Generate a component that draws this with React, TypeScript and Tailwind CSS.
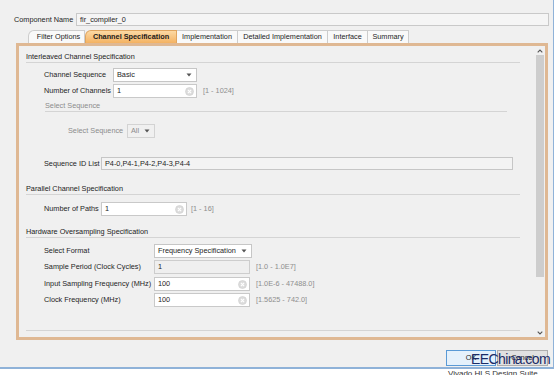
import React from "react";

const Caret = () => (
  <svg width="6" height="4" viewBox="0 0 6 4" className="shrink-0">
    <path d="M0.5 0.5 L5.5 0.5 L3 3.5 Z" fill="#555" />
  </svg>
);

const ClearIcon = () => (
  <svg width="9" height="9" viewBox="0 0 9 9" className="shrink-0">
    <circle cx="4.5" cy="4.5" r="4" fill="#dcdcdc" stroke="#cfcfcf" strokeWidth="0.6" />
    <path d="M2.9 2.9 L6.1 6.1 M6.1 2.9 L2.9 6.1" stroke="#ffffff" strokeWidth="1.1" />
  </svg>
);

const Dropdown = ({ text, w, disabled }: { text: string; w: string; disabled?: boolean }) => (
  <div
    className={`${w} h-[14px] shrink-0 flex items-center justify-between pl-[3px] pr-[4px] border ${
      disabled ? "border-[#d3d3d3] bg-[#f0f0f0] text-[#8c8c8c]" : "border-[#c6c6c6] bg-white"
    }`}
  >
    <span>{text}</span>
    <Caret />
  </div>
);

const Input = ({ text, w, clear, disabled }: { text: string; w: string; clear?: boolean; disabled?: boolean }) => (
  <div
    className={`${w} h-[14px] shrink-0 flex items-center justify-between pl-[3px] pr-[2px] border ${
      disabled ? "border-[#cdcdcd] bg-[#efefef]" : "border-[#c9c9c9] bg-white"
    }`}
  >
    <span>{text}</span>
    {clear && <ClearIcon />}
  </div>
);

const Header = ({ text, h }: { text: string; h: string }) => (
  <div className={`${h} flex items-end border-b border-[#d4d4d4] text-[#222]`}>
    <span>{text}</span>
  </div>
);

const Range = ({ text, ml }: { text: string; ml: string }) => (
  <span className={`${ml} text-[#8e8e8e]`}>{text}</span>
);

export default function App() {
  return (
    <div className="relative w-[557px] h-[375px] overflow-hidden whitespace-nowrap bg-white text-[7.3px] leading-[10px] text-[#1e1e1e] font-['Liberation_Sans',Arial,sans-serif]">
      <div className="w-[554px] h-[369px] bg-[#f0f0f0] border-r border-b-2 border-[#8fb2d8] flex flex-col">
        {/* Component name */}
        <div className="flex items-center h-[13px] mt-[13px] pl-[14px] pr-[4px]">
          <span className="w-[62px] shrink-0">Component Name</span>
          <div className="flex-1 h-[13px] flex items-center pl-[3px] border border-[#c9c9c9] bg-[#f5f5f5]">
            fir_compiler_0
          </div>
        </div>

        {/* Tabs */}
        <div className="flex h-[13px] mt-[4px] pl-[28px]">
          <div className="w-[57px] flex items-center justify-center pl-[4px] border-t border-l border-r border-[#cdcdcd] bg-[#f9f9f9] rounded-tl-[6px]">
            Filter Options
          </div>
          <div className="w-[92px] flex items-center justify-center font-bold border-t border-x border-[#e0a55f] bg-gradient-to-b from-[#fcd9a3] to-[#f4b261] rounded-tl-[6px] text-[#1a1a1a]">
            Channel Specification
          </div>
          <div className="w-[61px] flex items-center justify-center border-t border-r border-[#cdcdcd] bg-[#f9f9f9]">
            Implementation
          </div>
          <div className="w-[90px] flex items-center justify-center border-t border-r border-[#cdcdcd] bg-[#f9f9f9]">
            Detailed Implementation
          </div>
          <div className="w-[40px] flex items-center justify-center border-t border-r border-[#cdcdcd] bg-[#f9f9f9]">
            Interface
          </div>
          <div className="w-[41px] flex items-center justify-center border-t border-r border-[#cdcdcd] bg-[#f9f9f9]">
            Summary
          </div>
        </div>

        {/* Panel */}
        <div className="ml-[16px] w-[532px] h-[297px] border-[3px] border-[#dfb893] flex bg-[#f0f0f0]">
          <div className="flex-1 flex flex-col pl-[7px] pr-[15px]">
            <Header text="Interleaved Channel Specification" h="h-[17px]" />

            <div className="mt-[5px] h-[14px] flex items-center ml-[18px]">
              <span className="w-[69px] shrink-0">Channel Sequence</span>
              <Dropdown text="Basic" w="w-[84px]" />
            </div>

            <div className="mt-[2px] h-[14px] flex items-center ml-[18px]">
              <span className="w-[69px] shrink-0">Number of Channels</span>
              <Input text="1" w="w-[84px]" clear />
              <Range text="[1 - 1024]" ml="ml-[6px]" />
            </div>

            <div className="h-[14px] flex items-end ml-[19px] mr-[13px] border-b border-[#d4d4d4] text-[#8c8c8c]">
              <span>Select Sequence</span>
            </div>

            <div className="mt-[12px] h-[14px] flex items-center ml-[42px]">
              <span className="w-[59px] shrink-0 text-[#8c8c8c]">Select Sequence</span>
              <Dropdown text="All" w="w-[28px]" disabled />
            </div>

            <div className="mt-[19px] h-[13px] flex items-center ml-[18px] mr-[7px]">
              <span className="w-[57px] shrink-0">Sequence ID List</span>
              <div className="flex-1 h-[13px] flex items-center pl-[3px] border border-[#c6c6c6] bg-[#f3f3f3]">
                P4-0,P4-1,P4-2,P4-3,P4-4
              </div>
            </div>

            <Header text="Parallel Channel Specification" h="h-[25px]" />

            <div className="mt-[7px] h-[14px] flex items-center ml-[18px]">
              <span className="w-[57px] shrink-0">Number of Paths</span>
              <Input text="1" w="w-[86px]" clear />
              <Range text="[1 - 16]" ml="ml-[4px]" />
            </div>

            <Header text="Hardware Oversampling Specification" h="h-[22px]" />

            <div className="mt-[6px] h-[14px] flex items-center ml-[18px]">
              <span className="w-[110px] shrink-0">Select Format</span>
              <Dropdown text="Frequency Specification" w="w-[98px]" />
            </div>

            <div className="mt-[2px] h-[14px] flex items-center ml-[18px]">
              <span className="w-[110px] shrink-0">Sample Period (Clock Cycles)</span>
              <Input text="1" w="w-[96px]" disabled />
              <Range text="[1.0 - 1.0E7]" ml="ml-[6px]" />
            </div>

            <div className="mt-[3px] h-[14px] flex items-center ml-[18px]">
              <span className="w-[110px] shrink-0">Input Sampling Frequency (MHz)</span>
              <Input text="100" w="w-[96px]" clear />
              <Range text="[1.0E-6 - 47488.0]" ml="ml-[6px]" />
            </div>

            <div className="mt-[2px] h-[14px] flex items-center ml-[18px]">
              <span className="w-[110px] shrink-0">Clock Frequency (MHz)</span>
              <Input text="100" w="w-[96px]" clear />
              <Range text="[1.5625 - 742.0]" ml="ml-[6px]" />
            </div>

            <div className="mt-[23px] border-t border-[#d4d4d4]" />
          </div>

          {/* Scrollbar */}
          <div className="w-[10px] flex flex-col bg-[#f0f0f0]">
            <div className="h-[9px] flex items-center justify-center">
              <svg width="6" height="4" viewBox="0 0 6 4">
                <path d="M0.7 3.3 L3 1 L5.3 3.3" fill="none" stroke="#555" strokeWidth="1.1" />
              </svg>
            </div>
            <div className="h-[222px] mx-[1px] bg-[#cdcdcd]" />
            <div className="flex-1" />
            <div className="h-[9px] flex items-center justify-center">
              <svg width="6" height="4" viewBox="0 0 6 4">
                <path d="M0.7 0.7 L3 3 L5.3 0.7" fill="none" stroke="#555" strokeWidth="1.1" />
              </svg>
            </div>
          </div>
        </div>

        {/* Buttons */}
        <div className="mt-[10px] h-[16px] flex justify-end gap-[1px] pr-[5px]">
          <div className="w-[50px] h-[16px] flex items-center justify-center border border-[#5a9ad6] bg-[#e5f1fb]">
            OK
          </div>
          <div className="w-[51px] h-[16px] flex items-center justify-center border border-[#adadad] bg-[#e1e1e1]">
            Cancel
          </div>
        </div>
      </div>

      {/* cut-off text below window */}
      <div className="absolute left-[448px] top-[370px] text-[8px] leading-[8px] text-[#333]">
        Vivado HLS Design Suite
      </div>

      {/* watermark */}
      <div className="absolute left-[471px] top-[351px] text-[14px] leading-[16px] tracking-[-0.6px] text-[#1c2c66]">
        EEChina.com
      </div>
    </div>
  );
}
